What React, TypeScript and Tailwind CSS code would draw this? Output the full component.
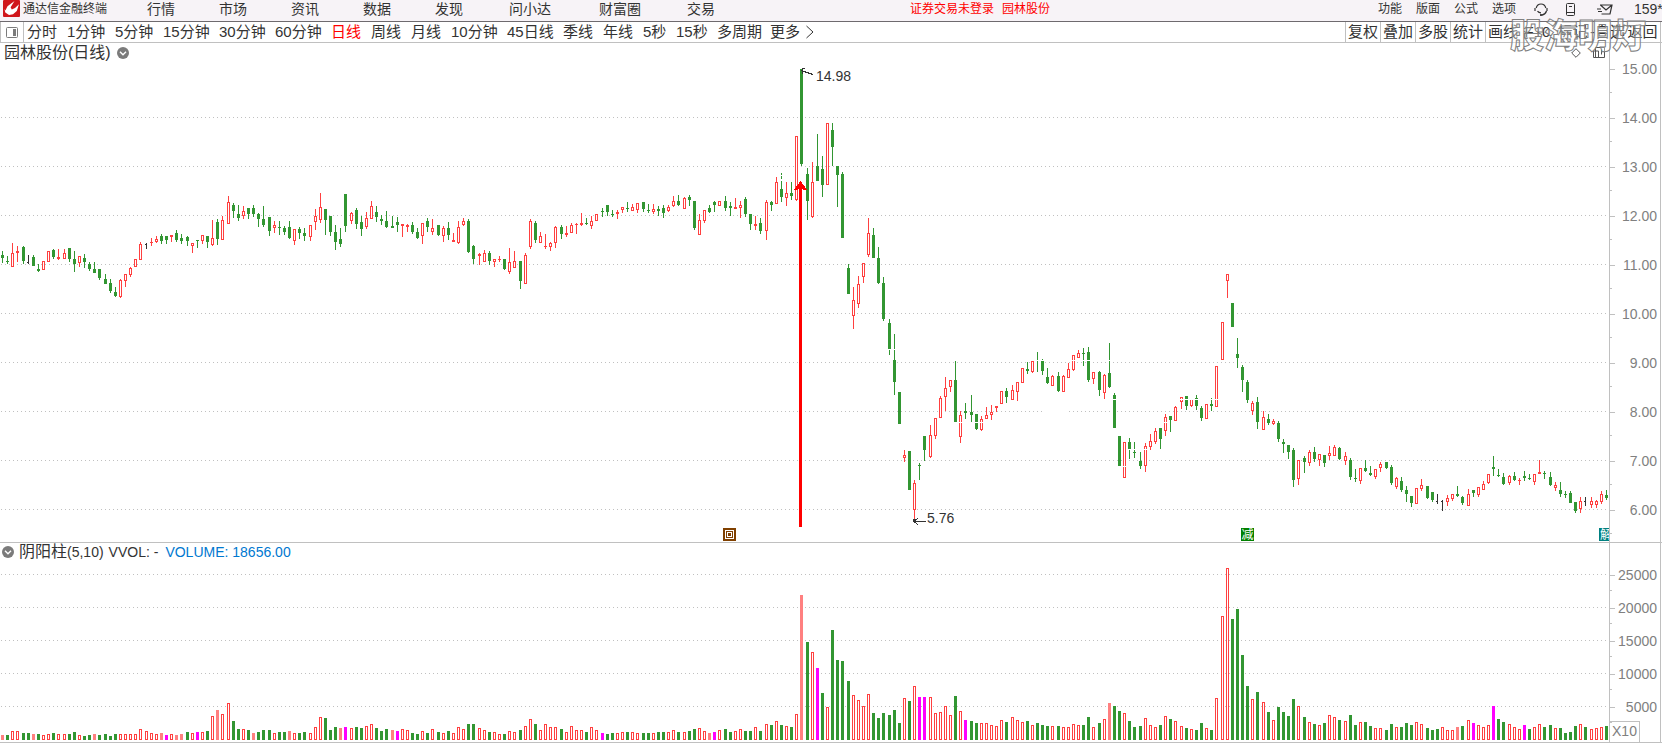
import React from "react";

type Tone = "g" | "r" | "k" | "p" | "m";
type Candle = { x: number; tone: Tone; high: number; top: number; bottom: number; low: number };
type Bar = { x: number; tone: Tone; top: number };

const INK: Record<Tone, string> = { g: "#329632", r: "#ff4040", k: "#333333", p: "#ff8080", m: "#ff00ff" };

const slotX = (i: number) => Math.floor(2.58 + i * 5.124);

/* Each block holds an origin and rows of "tone high open/close low", in thirds of a pixel below that origin. */
const CANDLE_BLOCKS: { origin: number; rows: string }[] = [
  {
    origin: 180,
    rows: `g 213 225 234 249;g 228 243 246 252;r 189 219 261 261;r 198 213 219 246;g 198 201 243 252;k 225 246 249 252;g 225 231 258 258;g 252 267 273 276;r 243 243 270 270;r 213 213 246 246;
g 207 210 231 237;r 207 231 237 240;r 207 219 237 237;g 204 204 237 246;g 213 237 252 276;r 228 228 249 261;g 222 234 246 264;g 246 252 267 273;g 246 267 279 279;g 267 267 294 300;
g 282 297 312 312;g 297 309 333 339;g 321 336 348 351;r 297 300 351 354;r 282 282 303 321;r 261 264 285 291;r 237 237 261 261;r 186 192 240 240;k 189 192 195 207;r 174 186 189 198;
r 168 177 186 189;g 162 168 183 192;g 168 168 180 192;r 165 165 171 186;g 150 159 180 186;g 162 174 183 192;g 168 171 183 198;r 189 189 198 219;g 180 180 183 204;r 165 165 183 192;
g 168 168 186 204;r 120 174 195 198;g 117 126 177 195;r 108 120 180 180;r 48 66 132 132;g 69 75 93 114;g 75 102 114 123;r 78 93 108 117;g 84 84 102 117;g 75 84 102 111;
g 99 102 117 141;g 78 117 135 141;g 111 111 153 168;r 123 135 144 159;g 123 141 144 165;g 138 144 156 165;g 123 141 174 177;r 147 147 183 195;g 141 147 159 177;g 144 159 168 183;
r 135 135 171 183;r 87 108 126 150;r 39 81 120 129;g 87 87 120 165;g 108 108 156 168;g 135 156 186 210;g 144 177 192 201;g 42 42 138 156;r 96 99 123 132;g 84 90 132 147;
g 108 126 147 168;r 96 114 141 147;r 63 78 117 117;g 78 96 111 126;g 105 117 123 135;g 93 123 141 144;g 108 138 144 144;g 111 126 135 156;r 132 132 138 171;r 132 135 141 156;
g 126 135 156 162;g 144 156 174 177;r 129 129 168 192;g 114 123 141 156;r 117 144 156 165;g 135 135 165 168;r 138 144 168 186;g 126 144 165 180;r 159 180 186 186;r 123 141 189 192;
r 114 123 135 138;g 117 123 216 219;g 195 198 237 252;r 219 222 228 255;r 210 219 246 246;g 213 219 243 255;r 237 237 246 261;r 228 237 240 246;g 237 237 267 270;r 204 246 276 282;
r 213 243 264 264;g 243 243 303 327;r 219 225 312 312;r 117 123 201 207;g 123 129 180 189;r 156 168 189 189;r 162 198 201 207;r 186 189 201 213;r 138 141 189 204;g 135 141 162 177;
r 138 159 165 171;r 129 135 159 159;r 129 132 135 162;r 99 129 135 138;g 114 129 132 135;r 108 123 138 147;r 102 102 123 123;g 84 93 96 111;g 75 75 96 108;g 90 102 105 111;
r 90 96 102 117;r 81 81 90 99;g 66 84 87 96;r 72 81 93 93;r 69 69 90 99;g 66 66 87 96;g 72 90 93 99;r 72 87 96 102;g 78 87 93 108;g 75 84 99 114;
r 75 81 93 96;r 48 63 78 81;g 45 63 75 78;r 51 54 87 87;g 45 51 60 78;g 63 63 144 150;r 102 120 165 165;r 90 90 123 129;g 75 84 96 99;g 63 66 75 96;
r 63 63 78 78;g 48 63 84 93;g 66 78 84 108;r 54 81 87 87;r 63 75 84 114;g 51 57 102 111;g 102 102 132 150;r 108 132 138 150;g 114 129 153 162;r 60 66 153 180;
g 63 66 75 93`,
  },
  {
    origin: 55,
    rows: `r 366 381 447 447;g 378 402 426 441;r 381 414 429 453;g 381 414 423 435;r 243 243 435 438;g 42 42 327 333;g 339 357 438 495;r 321 381 486 489;g 237 333 378 378;
g 303 342 390 426;r 204 204 390 390;g 204 225 276 333;g 333 333 360 456;g 351 357 549 549;g 627 639 717 717;r 696 735 783 822;r 663 687 747 759;r 624 624 666 684;r 489 534 600 606;
g 519 540 609 609;g 576 609 684 687;g 666 684 792 798`,
  },
  {
    origin: 290,
    rows: `g 87 99 177 195;g 132 210 276 315;g 306 306 402 402;r 480 495 504 516;g 483 483 600 600;r 570 579 660 690;g 519 525 528 570;
g 438 438 480 513;r 405 435 501 504;r 384 384 438 447;r 318 324 384 384;r 261 294 321 363;r 270 270 291 306;g 213 270 396 396;r 363 375 441 459;g 339 363 369 387;g 315 366 375 399;
g 372 372 417 420;r 378 387 420 423;r 351 375 387 387;r 345 366 375 390;r 348 348 354 366;r 303 303 342 342;g 294 303 321 339;r 285 300 330 330;r 276 276 306 333;r 234 234 279 279;
g 216 237 243 252;r 213 213 246 249;g 186 210 213 246;g 207 210 243 255;g 234 261 279 282;r 255 258 288 288;g 246 258 303 306;r 255 258 306 306;r 219 237 264 264;r 195 195 240 243;
r 180 189 204 204;g 174 189 192 228;g 171 186 270 276;r 246 246 267 282;g 243 246 300 318;r 252 255 309 327;g 159 249 291 294;g 309 315 414 414;g 438 438 528 528;r 456 456 564 564`,
  },
  {
    origin: 260,
    rows: `g 534 546 567 597;g 546 576 579 594;g 576 603 618 627;r 549 558 618 636;r 522 543 561 570;r 504 513 546 552;g 504 504 537 567;r 462 471 513 528;g 468 468 480 516;r 438 441 483 483;
r 411 411 426 447;g 408 408 438 450;r 417 417 438 441;g 405 414 438 450;g 438 444 474 483;r 432 432 477 477;g 414 432 438 453;r 318 318 441 441;r 186 186 300 300;r 42 42 63 114;
g 129 129 201 201;g 234 282 294 324;g 315 321 360 396;g 360 366 420 429;r 423 429 453 465;g 411 426 486 507;r 453 471 510 510;g 462 477 489 495;r 477 483 492 495;g 483 489 537 546;
g 537 546 552 579;g 555 555 576 597;g 564 570 660 681;r 600 600 657 675;g 588 594 606 639;r 570 576 609 618;g 561 576 597 606;r 582 582 600 618;g 585 585 609 621;r 558 579 588 600;
r 555 561 588 588;g 561 564 597 600;r 576 588 603 615;g 594 600 651 660;g 627 654 657 666;r 624 624 663 672;g 600 624 633 636;g 618 639 645 648;r 627 627 651 657`,
  },
  {
    origin: 420,
    rows: `r 126 132 144 156;g 126 126 144 147;g 135 141 189 195;r 171 174 201 207;g 171 183 210 216;g 198 210 222 246;g 228 228 249 261;r 204 204 252 252;r 177 195 207 213;g 198 198 234 237;
g 216 216 240 246;k 222 243 246 252;k 240 243 246 273;r 225 234 246 258;r 222 222 237 243;g 198 222 228 231;g 228 231 249 255;r 207 222 258 258;g 210 210 219 231;r 201 201 225 231;
r 183 192 210 210;r 162 162 189 192;g 108 141 147 168;g 147 165 168 171;g 159 171 192 195;r 165 168 189 195;g 156 168 180 183;r 174 180 183 195;g 153 168 174 183;g 162 174 177 180;
r 162 162 186 195;r 120 156 162 162;g 153 159 162 177;g 156 171 195 198;r 186 195 204 213;g 186 210 222 231;g 213 222 225 234;g 213 219 249 249;g 246 246 273 279;r 231 243 267 279;
k 231 243 246 258;r 231 243 255 264;r 240 243 255 264;r 213 222 246 252;g 210 225 234 240`,
  },
];

/* Bar tops, in thirds of a pixel below the origin. */
const VOLUME_BLOCKS: { origin: number; rows: string }[] = [
  {
    origin: 536,
    rows: `p597 g597 r586 r586 g591 g591 p594 g594 r598 r595 g591 r595 r595 g594 g588 r598 g600 g597 p594 g597 g594 g600 g594 r595 r595 r595 r595 r580 r586 r592
r595 p591 m597 r595 p597 p594 g588 r592 m588 r589 g585 r541 p522 r535 r502 g555 g579 r580 g582 p591 g588 g582 g582 r592 g588 g588 p585 r592 g591 g588
r592 r574 r544 g546 g582 g573 p576 m573 r577 g573 g576 r571 r565 g576 g585 g579 p582 m585 r580 r583 g591 g594 r586 g591 r580 g588 r592 g585 r592 r574
r580 g564 g564 r577 r583 g588 r589 r595 g594 r586 r589 g582 r571 r550 g564 r583 r565 r574 r574 g579 r589 r571 r583 r583 g588 r574 r583 m591 g594 g591
r592 r589 g588 r589 r592 g591 g591 r592 g588 g588 r589 r583 g588 r589 g585 g579 r577 r586 p591 m588 r583 g579 g588 r586 r580 g585 g585 r574 g585 r565
g567 r556 g567 r571 g573 r535`,
  },
  {
    origin: 556,
    rows: `p117 g258 r289 m336 g411 r454 g222 g312 g315 g375 r418 r433 r451 r415 g471 g486 g471 g477 g462 g501 r427 g435 r391 m423
m423 r424 r472 r469 r451 r478 g420 r466 m492 g495 g501 r502 r502 r508 r511 r493 g498 r484 r493 r499 g495 r508 g501 g507 g510 r511 g510 r514 r514 r505
r508 g507 g483 r514 g501 r490 p441 g450 g465 r472 g495 g513 g510 r487 r508 r514 g507 r481 g489 r496 r511 g516 r520 g522 g501 r517 g522 r427 r181 r37
g189 g159 g297 g390 r430 g408 r439 g468 r493 g453 g468 g480 g429 r451 g483 r499 g504 r508 g501 r478 r484 g492 r496 g477 g507 r499 g498 g510 r517 r517
g522 g504 r514 g513 g501 g507 r499 r505 g516 g522 g519 r514 r523 r523 p513 g510 r493 m501 r508 r514 r508 m450 g489 g498 r505 r514 r520 m507 g519 r514
r505 g513 g507 r517 g516 g531 g528 g510 r505 g513 r520 r517 r514 g510`,
  },
];

const CANDLES: Candle[] = CANDLE_BLOCKS.flatMap(({ origin, rows }) =>
  rows.split(";").map((row) => {
    const [tone, ...v] = row.trim().split(" ");
    const [high, top, bottom, low] = v.map((n) => Math.round(origin + Number(n) / 3));
    return { x: 0, tone: tone as Tone, high, top, bottom, low };
  }),
).map((c, i) => ({ ...c, x: slotX(i) }));

const BARS: Bar[] = VOLUME_BLOCKS.flatMap(({ origin, rows }) =>
  rows.split(/\s+/).map((cell) => ({
    x: 0,
    tone: cell[0] as Tone,
    top: Math.round(origin + Number(cell.slice(1)) / 3),
  })),
).map((b, i) => ({ ...b, x: slotX(i) }));

const MENU = ["行情", "市场", "资讯", "数据", "发现", "问小达", "财富圈", "交易"];
const PERIODS: [string, string][] = [
  ["分时", "w-10"], ["1分钟", "w-12"], ["5分钟", "w-12"], ["15分钟", "w-14"], ["30分钟", "w-14"], ["60分钟", "w-14"],
  ["日线", "w-10"], ["周线", "w-10"], ["月线", "w-10"], ["10分钟", "w-14"], ["45日线", "w-14"], ["季线", "w-10"],
  ["年线", "w-10"], ["5秒", "w-[33px]"], ["15秒", "w-[41px]"], ["多周期", "w-[53px]"], ["更多", "w-9"],
];
const TOOLS = ["复权", "叠加", "多股", "统计", "画线", "F10", "标记", "-自选", "返回"];
const PRICES = ["15.00", "14.00", "13.00", "12.00", "11.00", "10.00", "9.00", "8.00", "7.00", "6.00"];
const VOLUMES = ["25000", "20000", "15000", "10000", "5000"];

function CandleMark({ c }: { c: Candle }) {
  const ink = INK[c.tone];
  const body = c.bottom - c.top;
  const hollow = c.tone === "r" && body > 2;
  return (
    <g fill={ink}>
      {c.top > c.high && <rect x={c.x} y={c.high} width={1} height={c.top - c.high} />}
      {c.low > c.bottom && <rect x={c.x} y={c.bottom} width={1} height={c.low - c.bottom} />}
      {hollow ? (
        <rect x={c.x - 0.5} y={c.top + 0.5} width={2} height={body - 1} fill="#fff" stroke={ink} />
      ) : (
        <rect x={c.x - 1} y={c.top} width={c.tone === "k" ? 2 : 3} height={Math.max(body, 1)} />
      )}
    </g>
  );
}

function VolumeMark({ b }: { b: Bar }) {
  const height = 740 - b.top;
  return b.tone === "r" ? (
    <rect x={b.x - 0.5} y={b.top + 0.5} width={2} height={height - 1} fill="#fff" stroke={INK.r} />
  ) : (
    <rect x={b.x - 1} y={b.top} width={3} height={height} fill={INK[b.tone]} />
  );
}

function GridLine({ y }: { y: number }) {
  return <line x1={1} x2="100%" y1={y + 0.5} y2={y + 0.5} stroke="#c0c0c0" strokeDasharray="1 3" />;
}

function Collapse() {
  return (
    <button type="button" aria-label="展开" className="block shrink-0">
      <svg width="12" height="12" viewBox="0 0 12 12">
        <circle cx="6" cy="6" r="6" fill="#7b7b7b" />
        <path d="M3 4.8 6 7.8 9 4.8" fill="none" stroke="#fff" strokeWidth="1.4" />
      </svg>
    </button>
  );
}

function AxisLabel({ text, tall }: { text: string; tall?: boolean }) {
  return (
    <li className={`relative flex items-center justify-end pr-[3px] ${tall ? "h-[49px]" : "h-[33px]"}`}>
      <span className="absolute left-0 top-1/2 h-px w-[5px] bg-[#c0c0c0]" />
      <span className="absolute bottom-0 left-0 h-px w-[2px] bg-[#c0c0c0]" />
      {text}
    </li>
  );
}

export default function App() {
  return (
    <div className="relative overflow-hidden bg-white font-['Liberation_Sans','Noto_Sans_CJK_SC',sans-serif] text-[#333]">
      <header className="flex h-[22px] items-start border-b border-[#6e6a6e] bg-[#f7f3f7] pl-[3px] text-xs leading-[18px] whitespace-nowrap">
        <svg width="17" height="17" viewBox="0 0 17 17" className="mr-[3px] shrink-0">
          <rect width="17" height="17" rx="1" fill="#d0161b" />
          <path d="M11.500 1 4.500 6.200 2.400 10.600 1.500 9 2.300 12.600 6 15 10 14.300 13.800 11 16 4.200 12 8 8.800 9.400 7.600 7.200z" fill="#fff" />
        </svg>
        <h1 className="w-[124px] shrink-0">通达信金融终端</h1>
        <nav className="flex gap-11 text-sm leading-[18px]">
          {MENU.map((m) => (
            <button type="button" key={m} className={m.length === 3 ? "w-[46px]" : "w-7"}>
              {m}
            </button>
          ))}
        </nav>
        <p className="ml-[195px] flex gap-2 text-[#ff0000]">
          <span>证券交易未登录</span>
          <span>园林股份</span>
        </p>
        <div className="ml-auto flex h-[18px] shrink-0 items-center">
          <div className="mr-[18px] flex gap-[14px]">
            {["功能", "版面", "公式", "选项"].map((m) => (
              <button type="button" key={m}>{m}</button>
            ))}
          </div>
          <button type="button" aria-label="客服" className="mr-[18px]">
            <svg width="14" height="13" viewBox="0 0 14 13" fill="none" stroke="#333" strokeWidth="1.2">
              <path d="M2.200 5C2.800 2.600 4.600 1 7 1s4.200 1.600 4.800 4M3.500 8.200C4.300 9.300 5.500 9.900 7 9.900" />
              <path d="M1 5v3M13 5v3M12.500 8c-.6 2-2.200 3.600-4.600 4" />
              <path d="M6 12h2.500" strokeWidth="1.800" />
            </svg>
          </button>
          <button type="button" aria-label="手机" className="mr-[22px]">
            <svg width="9" height="13" viewBox="0 0 9 13" fill="none" stroke="#333">
              <rect x=".5" y=".5" width="8" height="12" rx="1" />
              <path d="M.5 9.500h8M3 3.500h3" />
            </svg>
          </button>
          <button type="button" aria-label="邮件" className="mr-[21px]">
            <svg width="16" height="11" viewBox="0 0 16 11" fill="none" stroke="#333" strokeWidth="1.2">
              <path d="M3 1h12l-2 9H4.500M3.500 1 9 6l6-5M0 5h4M1 7.500h4" />
            </svg>
          </button>
          <span className="w-7 overflow-hidden text-sm leading-[18px]">159*</span>
        </div>
      </header>

      <div className="flex h-[21px] items-stretch border-b border-[#c0c0c0] text-[15px] leading-5 whitespace-nowrap">
        <button type="button" aria-label="侧栏" className="flex w-6 shrink-0 items-center justify-center border-x border-[#c0c0c0]">
          <svg width="12" height="11" viewBox="0 0 12 11">
            <rect x=".5" y=".5" width="11" height="10" rx="1" fill="none" stroke="#7b7b7b" />
            <rect x="7" y="2" width="3" height="7" fill="#7b7b7b" />
          </svg>
        </button>
        <nav className="flex pl-[3px]">
          {PERIODS.map(([label, width]) => (
            <button type="button" key={label} className={`${width} shrink-0 text-left ${label === "日线" ? "text-[#ff0000]" : ""}`}>
              {label}
            </button>
          ))}
          <button type="button" aria-label="下一页">
            <svg width="8" height="14" viewBox="0 0 8 14">
              <path d="M.5 1 7 7 .5 13" fill="none" stroke="#333" />
            </svg>
          </button>
        </nav>
        <div className="mr-px ml-auto flex shrink-0 border-r border-[#c0c0c0]">
          {TOOLS.map((t, i) => (
            <button type="button" key={t} className={`w-[35px] text-center ${i < 5 ? "border-l border-[#c0c0c0]" : ""}`}>
              {t}
            </button>
          ))}
        </div>
      </div>

      <section className="flex h-[500px] border-b border-[#c0c0c0]">
        <div className="min-w-0 flex-1 overflow-hidden">
          <div className="flex h-[18px] items-center gap-[6px] pt-px pl-1 text-base leading-none">
            <h2>园林股份(日线)</h2>
            <Collapse />
            <div className="mr-1 ml-auto flex items-center gap-3">
              <svg width="10" height="10" viewBox="0 0 10 10">
                <path d="M5 .7 9.300 5 5 9.300.7 5z" fill="none" stroke="#555" />
              </svg>
              <svg width="12" height="11" viewBox="0 0 12 11" fill="none" stroke="#555">
                <path d="M2.500.5h9v10h-9zM.5 4h5v6.500h-5zM8.500 2.500v5" />
              </svg>
            </div>
          </div>
          <svg className="block h-[481px] w-full" shapeRendering="crispEdges">
            <g transform="translate(0 -61)">
              {PRICES.slice(1).map((p, i) => (
                <GridLine key={p} y={117 + i * 49} />
              ))}
              {CANDLES.map((c) => (
                <CandleMark key={c.x} c={c} />
              ))}
              <path d="M781.500 173v2M781.500 176v3" stroke="#329632" />
              <g fill="#fff">
                <rect x={1020} y={360} width={92} height={1} />
                <rect x={1095} y={399} width={126} height={1} />
                <rect x={888} y={349} width={10} height={1} />
                <rect x={958} y={422} width={26} height={1} />
                <rect x={1110} y={466} width={16} height={1} />
                <rect x={1126} y={449} width={24} height={1} />
                <rect x={1160} y={422} width={10} height={1} />
                <rect x={1042} y={411} width={24} height={1} />
              </g>
              <rect x={799} y={186} width={3} height={341} fill="#ff0000" />
              <path d="M800.500 182 806 189H803.500L800.500 186 797.500 189H795z" fill="#ff0000" stroke="#ff0000" />
              <g fill="none" stroke="#333">
                <path d="M801 70.500 813 74.500M805 68.500H802V74" />
                <path d="M914 521.500H926M918 518 914 521.500 918 525" />
              </g>
              <rect x={913} y={519} width={3} height={3} fill="#333" />
              <rect x={723} y={528} width={13} height={13} fill="#804000" />
              <rect x={725} y={530} width={9} height={9} fill="#fff" />
              <rect x={726} y={531} width={7} height={7} fill="#804000" />
              <rect x={727} y={532} width={5} height={5} fill="#fff" />
              <rect x={728} y={533} width={3} height={3} fill="#804000" />
              <rect x={1241} y={528} width={13} height={13} fill="#008000" />
              <rect x={1599} y={528} width={13} height={13} fill="#008080" />
            </g>
            <g transform="translate(0 -61)" fontSize={14} fill="#333">
              <text x={816} y={81}>14.98</text>
              <text x={927} y={523}>5.76</text>
              <text x={1241.5} y={539} fontSize={12} fill="#fff">减</text>
              <text x={1600} y={539} fontSize={12} fill="#fff">解</text>
            </g>
          </svg>
        </div>
        <ul className="mr-px w-[52px] shrink-0 border-x border-[#c0c0c0] pt-px text-sm text-[#808080]">
          {PRICES.map((p) => (
            <AxisLabel key={p} text={p} tall />
          ))}
        </ul>
      </section>

      <section className="flex h-[200px] border-b border-[#c0c0c0]">
        <div className="min-w-0 flex-1 overflow-hidden">
          <div className="flex h-6 items-start gap-[5px] pt-px pl-[2px] text-sm leading-4">
            <span className="mt-[2px]">
              <Collapse />
            </span>
            <h2>
              <span className="text-base leading-4">阴阳柱</span>(5,10)
            </h2>
            <span>VVOL: -</span>
            <span className="pl-[2px] text-[#0078d0]">VOLUME: 18656.00</span>
          </div>
          <svg className="block h-[175px] w-full" shapeRendering="crispEdges">
            <g transform="translate(0 -567)">
              {VOLUMES.map((v, i) => (
                <GridLine key={v} y={574 + i * 33} />
              ))}
              {BARS.map((b) => (
                <VolumeMark key={b.x} b={b} />
              ))}
            </g>
          </svg>
        </div>
        <div className="mr-px w-[52px] shrink-0 border-x border-[#c0c0c0] pt-[15px] text-sm text-[#808080]">
          <ul>
            {VOLUMES.map((v) => (
              <AxisLabel key={v} text={v} />
            ))}
          </ul>
          <p className="-mt-0.5 h-[21px] w-[30px] border-t border-r border-[#c0c0c0] text-center leading-[18px]">X10</p>
        </div>
      </section>

      <p className="pointer-events-none absolute top-[14px] right-[16px] text-[34px] leading-[44px] font-black text-white/40 [-webkit-text-stroke:1px_#808080]">
        股海明灯
      </p>
    </div>
  );
}
